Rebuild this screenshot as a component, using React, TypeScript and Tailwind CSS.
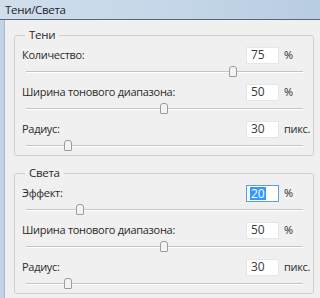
import React from 'react';

type Item = { label: string; value: string; unit: string; thumb: number; focused?: boolean };

const shadows: Item[] = [
  { label: 'Количество:', value: '75', unit: '%', thumb: 207 },
  { label: 'Ширина тонового диапазона:', value: '50', unit: '%', thumb: 138 },
  { label: 'Радиус:', value: '30', unit: 'пикс.', thumb: 42 },
];

const highlights: Item[] = [
  { label: 'Эффект:', value: '20', unit: '%', thumb: 54, focused: true },
  { label: 'Ширина тонового диапазона:', value: '50', unit: '%', thumb: 138 },
  { label: 'Радиус:', value: '30', unit: 'пикс.', thumb: 42 },
];

function Slider({ thumb, last }: { thumb: number; last: boolean }) {
  return (
    <div className={`${last ? 'h-[18px]' : 'h-[21px]'} pt-[8px] pl-[11px] pr-[10px]`}>
      <div className="relative h-[2px] border-t border-[#c4c4c4] border-b border-b-white">
        <div
          className="absolute top-[-6px] w-[8px] h-[11px] bg-[#f3f3f3] border border-[#9c9c9c] rounded-t-[3px] rounded-b-[1px]"
          style={{ left: thumb - 4 }}
        />
      </div>
    </div>
  );
}

function Group({ title, items }: { title: string; items: Item[] }) {
  return (
    <fieldset className="border border-[#d0d0d0] rounded-[3px] ml-[9px] mr-[6px] pt-[4px]">
      <legend className="ml-[10px] px-[4px] h-[16px] leading-[16px] text-[11.5px] text-[#2a2a2a]">{title}</legend>
      {items.map((it, i) => (
        <div key={i}>
          <div className="flex items-center h-[16px] pl-[7px]">
            <span className="flex-1 text-[11px] text-[#2a2a2a]">{it.label}</span>
            <div
              className={`w-[33px] h-[17px] bg-white border ${it.focused ? 'border-[#5a9de0]' : 'border-[#e4e6ea]'} flex items-center pl-[3px] text-[12px] text-[#3a3a3a] tracking-normal`}
            >
              {it.focused ? (
                <span className="bg-[#3399ff] text-white leading-[13px] px-[1px]">{it.value}</span>
              ) : (
                <span className="px-[1px]">{it.value}</span>
              )}
            </div>
            <span className="w-[29px] ml-[5px] text-[11px] text-[#2a2a2a]">{it.unit}</span>
          </div>
          <Slider thumb={it.thumb} last={i === items.length - 1} />
        </div>
      ))}
    </fieldset>
  );
}

export default function App() {
  return (
    <div
      className="w-[320px] h-[298px] overflow-hidden flex flex-col tracking-[-0.3px]"
      style={{ fontFamily: '"Open Sans", "Noto Sans", sans-serif' }}
    >
      <div className="h-[20px] shrink-0 border-b border-[#5d6673] bg-gradient-to-r from-[#d0deed] via-[#c6d7e9] to-[#b8cce2] flex items-center pl-[5px]">
        <span className="text-[11.5px] text-[#1e1e1e] leading-none">Тени/Света</span>
      </div>
      <div className="flex flex-1">
        <div className="w-[5px] bg-[#c3d3e5] border-r border-[#aab8c8]" />
        <div className="flex-1 bg-[#f0f0f0] pt-[7px] flex flex-col gap-[9px]">
          <Group title="Тени" items={shadows} />
          <Group title="Света" items={highlights} />
        </div>
      </div>
    </div>
  );
}
